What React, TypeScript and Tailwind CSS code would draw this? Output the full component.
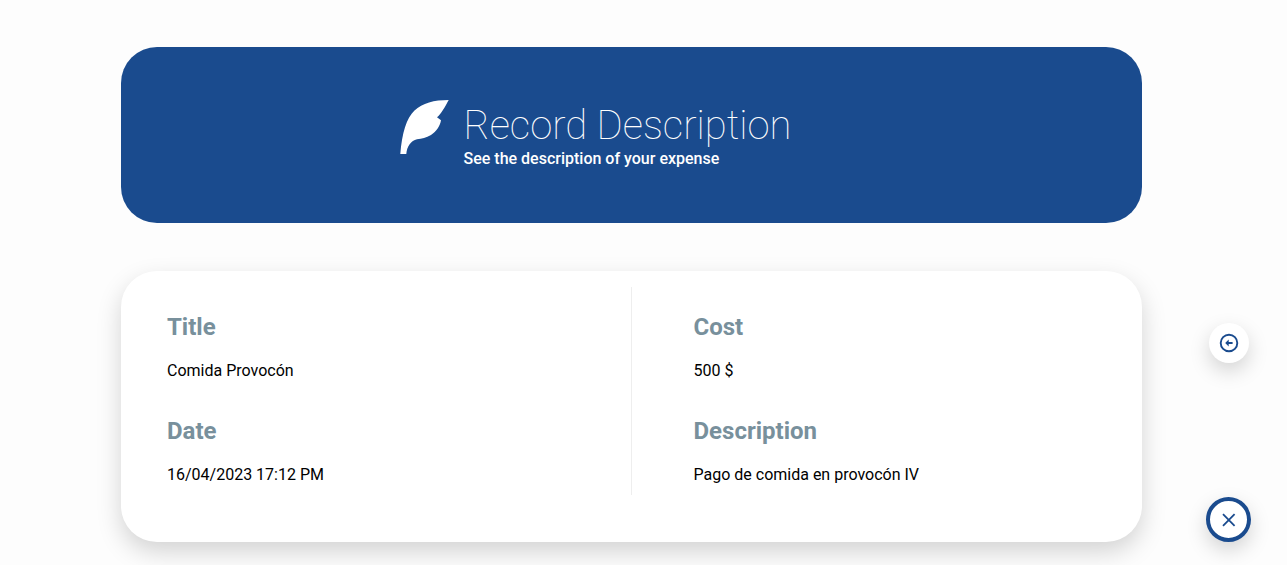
type FieldProps = { label: string; value: string };

function Field({ label, value }: FieldProps) {
  return (
    <div>
      <dt className="text-2xl font-bold text-[#78909c]">{label}</dt>
      <dd className="mt-4 text-base text-black">{value}</dd>
    </div>
  );
}

function Feather() {
  return (
    <svg viewBox="0 0 50 56" className="h-14 w-[50px] shrink-0" fill="#fff" aria-hidden="true">
      <path d="M48.700 1C34 1 22.500 4 14.500 11.500C6.500 19 2 34 0.300 55H6.300C7 47 11 41.500 17 40.200C22 39.500 26 39 31 36C36.500 32.500 40 27 41 21.300L37 18.300C41 15 45 8 48.700 1Z" />
    </svg>
  );
}

export default function App() {
  return (
    <div className="flex min-h-screen items-end bg-[#fdfdfd] pb-[23px] font-['Roboto',sans-serif]">
      <main className="ml-[121px] flex min-w-0 flex-1 flex-col gap-12 pt-[47px]">
        <header className="flex h-44 items-center justify-center rounded-[36px] bg-[#1a4b8e] pr-[72px] text-white">
          <div className="flex items-start gap-[14px] pb-0.5">
            <Feather />
            <div className="pt-1">
              <h1 className="text-[40px] leading-[46px] font-thin">Record Description</h1>
              <p className="text-base leading-5 font-medium">See the description of your expense</p>
            </div>
          </div>
        </header>
        <section className="rounded-[36px] bg-white px-4 pt-4 pb-[47px] shadow-[0_10px_24px_rgba(0,0,0,0.17)]">
          <dl className="grid grid-cols-2">
            <div className="flex flex-col gap-8 border-r border-[#eeeeee] pt-6 pb-2 pl-[30px]">
              <Field label="Title" value="Comida Provocón" />
              <Field label="Date" value="16/04/2023 17:12 PM" />
            </div>
            <div className="flex flex-col gap-8 pt-6 pb-2 pl-[62px]">
              <Field label="Cost" value="500 $" />
              <Field label="Description" value="Pago de comida en provocón IV" />
            </div>
          </dl>
        </section>
      </main>
      <nav className="mr-9 ml-16 flex w-[45px] shrink-0 flex-col items-center gap-[134px]">
        <button type="button" aria-label="Back" className="flex size-10 items-center justify-center rounded-full bg-white text-[#1a4b8e] shadow-[0_8px_20px_rgba(0,0,0,0.17)]">
          <svg viewBox="0 0 20 20" className="size-5" fill="none" stroke="currentColor" aria-hidden="true">
            <circle cx="10" cy="10" r="8.300" strokeWidth="1.900" />
            <path d="M9 10H13.600" strokeWidth="2" />
            <path d="M6.200 10L9.700 6.600V13.400Z" fill="currentColor" stroke="none" />
          </svg>
        </button>
        <button type="button" aria-label="Close" className="flex size-[45px] items-center justify-center rounded-full border-4 border-[#1a4b8e] bg-white text-[#1a4b8e] shadow-[0_8px_20px_rgba(0,0,0,0.17)]">
          <svg viewBox="0 0 20 20" className="size-5" fill="none" stroke="currentColor" strokeWidth="1.800" aria-hidden="true">
            <path d="M4 4.200L15.600 15.800M15.600 4.200L4 15.800" />
          </svg>
        </button>
      </nav>
    </div>
  );
}
